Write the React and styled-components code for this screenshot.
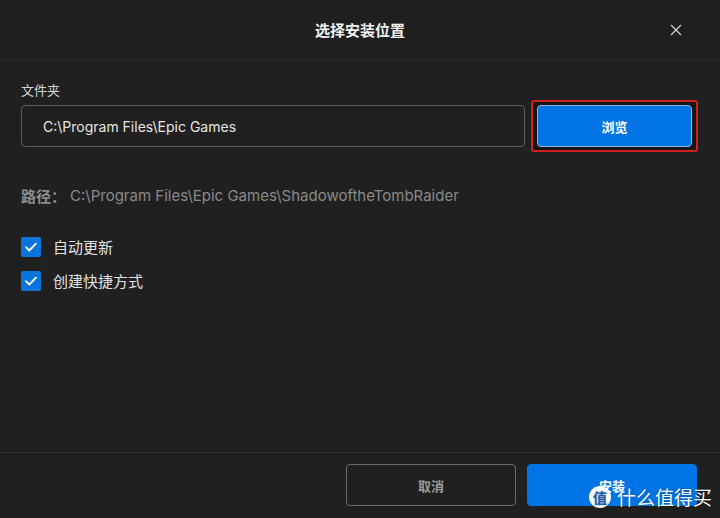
import React from 'react'
import styled, { createGlobalStyle } from 'styled-components'

const GlobalStyle = createGlobalStyle`
	html, body {
		margin: 0;
		padding: 0;
		background: #202020;
	}
	body {
		font-family: "Inter", "Noto Sans CJK SC", sans-serif;
	}
`

const Dialog = styled.div`
	width: 720px;
	height: 518px;
	background: #202020;
	display: flex;
	flex-direction: column;
	position: relative;
	overflow: hidden;
`

const Header = styled.div`
	height: 60px;
	box-sizing: border-box;
	border-bottom: 1px solid #292929;
	background: #1f1f1f;
	display: flex;
	align-items: center;
	justify-content: center;
	position: relative;
`

const Title = styled.h1`
	margin: 0;
	font-size: 15px;
	font-weight: 700;
	color: #f2f2f2;
	font-family: "Noto Sans CJK SC", sans-serif;
`

const Close = styled.button`
	position: absolute;
	right: 36px;
	top: 22px;
	width: 16px;
	height: 16px;
	padding: 0;
	border: 0;
	background: none;
	display: flex;
	align-items: center;
	justify-content: center;
`

const Body = styled.div`
	flex: 1;
	padding: 21px 21px 0 21px;
	display: flex;
	flex-direction: column;
`

const Label = styled.div`
	font-size: 13px;
	color: #d6d6d6;
	font-family: "Noto Sans CJK SC", sans-serif;
	line-height: 18px;
	margin-bottom: 1px;
`

const FolderRow = styled.div`
	display: flex;
	align-items: center;
	gap: 6px;
`

const Input = styled.div`
	width: 504px;
	height: 42px;
	box-sizing: border-box;
	border: 1px solid #5c5c5c;
	border-radius: 4px;
	padding-left: 21px;
	display: flex;
	align-items: center;
	font-size: 14px;
	color: #e6e6e6;
`

const Highlight = styled.div`
	width: 167px;
	height: 52px;
	box-sizing: border-box;
	border: 2px solid #d0201c;
	border-radius: 3px;
	padding: 3px 4px;
	background: #151515;
	display: flex;
`

const Button = styled.button`
	flex: ${p => (p.grow ? 1 : 'none')};
	width: ${p => (p.grow ? 'auto' : '170px')};
	height: 42px;
	box-sizing: border-box;
	border-radius: 4px;
	font-family: "Noto Sans CJK SC", sans-serif;
	font-size: 13px;
	font-weight: 700;
	cursor: pointer;
	background: ${p => (p.primary ? '#0074e4' : 'transparent')};
	color: ${p => (p.primary ? '#ffffff' : '#9c9c9c')};
	border: 1px solid ${p => (p.primary ? (p.focused ? '#8fb6e0' : '#0074e4') : '#6a6a6a')};
`

const PathLine = styled.div`
	margin-top: 34px;
	display: flex;
	align-items: center;
	font-size: 15px;
	color: #8a8a8a;
	line-height: 20px;
`

const PathKey = styled.span`
	font-family: "Noto Sans CJK SC", sans-serif;
	font-weight: 700;
	width: 49px;
	color: #8e8e8e;
`

const Checks = styled.div`
	margin-top: 31px;
	display: flex;
	flex-direction: column;
	gap: 14px;
`

const CheckRow = styled.label`
	display: flex;
	align-items: center;
	gap: 12px;
	font-family: "Noto Sans CJK SC", sans-serif;
	font-size: 15px;
	color: #e2e2e2;
	line-height: 20px;
`

const Box = styled.span`
	width: 20px;
	height: 20px;
	border-radius: 2px;
	background: #0a74da;
	display: flex;
	align-items: center;
	justify-content: center;
`

const Footer = styled.div`
	height: 66px;
	box-sizing: border-box;
	border-top: 1px solid #303030;
	display: flex;
	justify-content: flex-end;
	align-items: flex-start;
	padding: 11px 23px 0 0;
	gap: 11px;
`

const Watermark = styled.div`
	position: absolute;
	right: 8px;
	bottom: 8px;
	display: flex;
	align-items: center;
	gap: 6px;
	color: #ffffff;
	font-family: "Noto Sans CJK SC", sans-serif;
	font-size: 19px;
	text-shadow: 0 0 2px rgba(0, 0, 0, 0.4);
`

const Seal = styled.span`
	width: 22px;
	height: 22px;
	border-radius: 50%;
	background: #ffffff;
	color: #1a5fb0;
	font-size: 14px;
	font-weight: 700;
	display: flex;
	align-items: center;
	justify-content: center;
`

const Check = () => (
	<svg width='14' height='14' viewBox='0 0 14 14'>
		<path d='M2 7.2l3.3 3.3L12 3.6' fill='none' stroke='#fff' strokeWidth='1.8' strokeLinecap='round' strokeLinejoin='round'/>
	</svg>
)

export default function App () {
	return (
		<Dialog>
			<GlobalStyle/>
			<Header>
				<Title>选择安装位置</Title>
				<Close aria-label='close'>
					<svg width='12' height='12' viewBox='0 0 12 12'>
						<path d='M1 1l10 10M11 1L1 11' stroke='#cfcfcf' strokeWidth='1.3'/>
					</svg>
				</Close>
			</Header>
			<Body>
				<Label>文件夹</Label>
				<FolderRow>
					<Input>C:\Program Files\Epic Games</Input>
					<Highlight>
						<Button primary focused grow>浏览</Button>
					</Highlight>
				</FolderRow>
				<PathLine>
					<PathKey>路径：</PathKey>
					<span>C:\Program Files\Epic Games\ShadowoftheTombRaider</span>
				</PathLine>
				<Checks>
					<CheckRow><Box><Check/></Box>自动更新</CheckRow>
					<CheckRow><Box><Check/></Box>创建快捷方式</CheckRow>
				</Checks>
			</Body>
			<Footer>
				<Button>取消</Button>
				<Button primary>安装</Button>
			</Footer>
			<Watermark>
				<Seal>值</Seal>
				什么值得买
			</Watermark>
		</Dialog>
	)
}
